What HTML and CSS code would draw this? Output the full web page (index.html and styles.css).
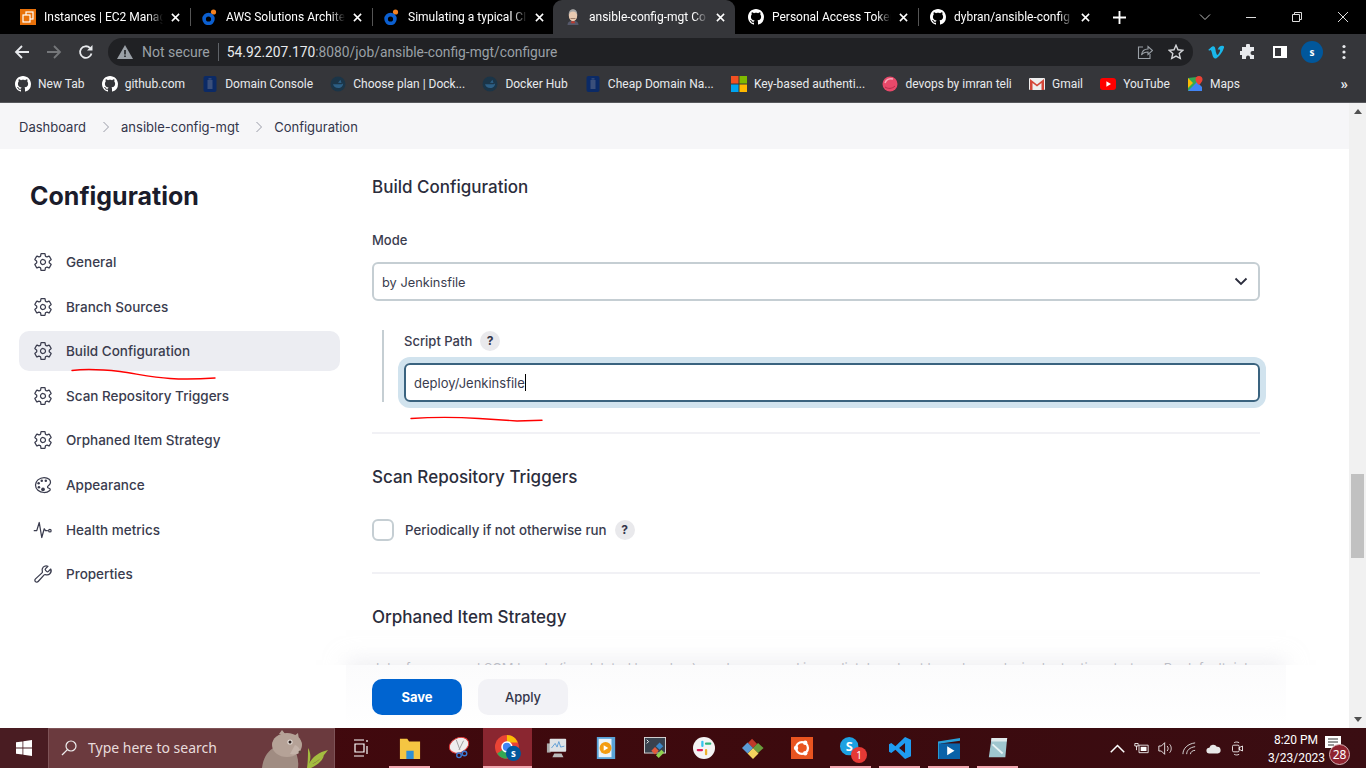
FILE: index.html
```html
<!DOCTYPE html>
<html lang="en">
<head>
  <meta charset="UTF-8" />
  <title>ansible-config-mgt Config [Jenkins]</title>
  <link rel="stylesheet" href="styles.css">
</head>
<body>

  <!-- shared icons -->
  <svg class="defs" aria-hidden="true">
    <symbol id="i-github" viewBox="0 0 16 16">
      <path fill="currentColor" d="M8 0C3.58 0 0 3.58 0 8c0 3.54 2.29 6.53 5.47 7.59.4.07.55-.17.55-.38 0-.19-.01-.82-.01-1.49-2.01.37-2.53-.49-2.69-.94-.09-.23-.48-.94-.82-1.13-.28-.15-.68-.52-.01-.53.63-.01 1.08.58 1.23.82.72 1.21 1.87.87 2.33.66.07-.52.28-.87.51-1.07-1.78-.2-3.64-.89-3.64-3.95 0-.87.31-1.59.82-2.15-.08-.2-.36-1.02.08-2.12 0 0 .67-.21 2.2.82.64-.18 1.32-.27 2-.27s1.36.09 2 .27c1.53-1.04 2.2-.82 2.2-.82.44 1.1.16 1.92.08 2.12.51.56.82 1.27.82 2.15 0 3.07-1.87 3.75-3.65 3.95.29.25.54.73.54 1.48 0 1.07-.01 1.93-.01 2.2 0 .21.15.46.55.38A8.01 8.01 0 0 0 16 8c0-4.42-3.58-8-8-8z"/>
    </symbol>
    <symbol id="i-blue" viewBox="0 0 16 16">
      <circle cx="11.5" cy="3" r="2.6" fill="#f58220"/>
      <circle cx="6.5" cy="10" r="4.4" fill="none" stroke="#0b5fd0" stroke-width="3.6"/>
    </symbol>
    <symbol id="i-close" viewBox="0 0 10 10">
      <path d="M1 1l8 8M9 1l-8 8" fill="none" stroke="currentColor" stroke-width="1.7"/>
    </symbol>
    <symbol id="i-domain" viewBox="0 0 16 16">
      <rect x="1.5" width="13" height="16" rx="2" fill="#0b2a66"/>
      <rect x="5.5" y="4" width="5" height="9" fill="#3a4f7a"/>
      <rect x="6.5" y="2.2" width="3" height="1.4" fill="#3a4f7a"/>
    </symbol>
    <symbol id="i-docker" viewBox="0 0 16 16">
      <circle cx="8" cy="8" r="7.5" fill="#1b3548"/>
      <path d="M3 8.3h8.5c.6 0 1.2-.4 1.6-1 .1 3-2 4.8-4.8 4.8-2.8 0-4.8-1.5-5.3-3.8z" fill="#2d5f85"/>
      <path d="M10.5 3.8l1 3.2-3.5-.3z" fill="#2d5f85"/>
    </symbol>
    <symbol id="i-gear" viewBox="0 0 512 512">
      <path fill="none" stroke="currentColor" stroke-width="32" stroke-linecap="round" stroke-linejoin="round" d="M262.29 192.31a64 64 0 1057.4 57.4 64.13 64.13 0 00-57.4-57.4zM416.39 256a154.34 154.34 0 01-1.53 20.79l45.21 35.46a10.81 10.81 0 012.45 13.75l-42.77 74a10.81 10.81 0 01-13.14 4.59l-44.9-18.08a16.11 16.11 0 00-15.17 1.75A164.48 164.48 0 01325 400.8a15.94 15.94 0 00-8.82 12.14l-6.73 47.89a11.08 11.08 0 01-10.68 9.17h-85.54a11.11 11.11 0 01-10.69-8.87l-6.72-47.82a16.07 16.07 0 00-9-12.22 155.3 155.3 0 01-21.46-12.57 16 16 0 00-15.11-1.71l-44.89 18.07a10.81 10.81 0 01-13.14-4.58l-42.77-74a10.8 10.8 0 012.45-13.75l38.21-30a16.05 16.05 0 006-14.08c-.36-4.17-.58-8.33-.58-12.5s.21-8.27.58-12.35a16 16 0 00-6.07-13.94l-38.19-30A10.81 10.81 0 0149.48 186l42.77-74a10.81 10.81 0 0113.14-4.59l44.9 18.08a16.11 16.11 0 0015.17-1.75A164.48 164.48 0 01187 111.2a15.94 15.94 0 008.82-12.14l6.73-47.89A11.08 11.08 0 01213.23 42h85.54a11.11 11.11 0 0110.69 8.87l6.72 47.82a16.07 16.07 0 009 12.22 155.3 155.3 0 0121.46 12.57 16 16 0 0015.11 1.71l44.89-18.07a10.81 10.81 0 0113.14 4.58l42.77 74a10.8 10.8 0 01-2.45 13.75l-38.21 30a16.05 16.05 0 00-6.07 14.08c.33 4.14.55 8.3.55 12.47z"/>
    </symbol>
  </svg>

  <!-- tab strip -->
  <header class="tabstrip">
    <div class="tab">
      <svg class="fav" viewBox="0 0 16 16"><rect width="16" height="16" fill="#e8710a"/><rect x="6" y="3" width="7" height="7" fill="none" stroke="#fff" stroke-width="1.2"/><rect x="3" y="6" width="7" height="7" fill="#e8710a" stroke="#fff" stroke-width="1.2"/></svg>
      <span class="tab-title">Instances | EC2 Manag</span>
      <svg class="tab-close"><use href="#i-close"/></svg>
    </div>
    <div class="tab">
      <svg class="fav"><use href="#i-blue"/></svg>
      <span class="tab-title">AWS Solutions Archite</span>
      <svg class="tab-close"><use href="#i-close"/></svg>
    </div>
    <div class="tab">
      <svg class="fav"><use href="#i-blue"/></svg>
      <span class="tab-title">Simulating a typical CI</span>
      <svg class="tab-close"><use href="#i-close"/></svg>
    </div>
    <div class="tab tab-active">
      <svg class="fav" viewBox="0 0 16 16"><path d="M2.500 16c0-3 2.500-4.500 5.500-4.500s5.500 1.500 5.500 4.500z" fill="#55586a"/><ellipse cx="8" cy="6.500" rx="4.200" ry="5.800" fill="#e8c9b0"/><path d="M3.800 6C3.400 2 6 .3 8 .3S12.600 2 12.200 6c-1-2.500-2-3.400-4.200-3.400S4.800 3.500 3.800 6z" fill="#a5a5a5"/><path d="M5.500 9.500h5" stroke="#8a6a58" stroke-width=".8"/><path d="M6.500 12.200h3l.5 2h-4z" fill="#c0392b"/></svg>
      <span class="tab-title">ansible-config-mgt Co</span>
      <svg class="tab-close"><use href="#i-close"/></svg>
    </div>
    <div class="tab">
      <svg class="fav fav-white"><use href="#i-github"/></svg>
      <span class="tab-title">Personal Access Token</span>
      <svg class="tab-close"><use href="#i-close"/></svg>
    </div>
    <div class="tab">
      <svg class="fav fav-white"><use href="#i-github"/></svg>
      <span class="tab-title">dybran/ansible-config</span>
      <svg class="tab-close"><use href="#i-close"/></svg>
    </div>
    <svg class="new-tab" viewBox="0 0 14 14"><path d="M7 0v14M0 7h14" stroke="#fff" stroke-width="2"/></svg>
    <div class="win-controls">
      <svg viewBox="0 0 12 12"><path d="M1 3.500l5 5 5-5" fill="none" stroke="#bbb" stroke-width="1"/></svg>
      <svg viewBox="0 0 12 12"><path d="M1 6.500h10" stroke="#ddd" stroke-width="1"/></svg>
      <svg viewBox="0 0 12 12"><path d="M1.500 3.500h7v7h-7zM3.500 3.500v-2h7v7h-2" fill="none" stroke="#ddd" stroke-width="1"/></svg>
      <svg viewBox="0 0 12 12"><path d="M1 1l10 10M11 1L1 11" stroke="#ddd" stroke-width="1"/></svg>
    </div>
  </header>

  <!-- address bar -->
  <div class="toolbar">
    <svg class="nav-icon" viewBox="0 0 16 16"><path d="M15 8H2M8 2L2 8l6 6" fill="none" stroke="#e8eaed" stroke-width="1.800"/></svg>
    <svg class="nav-icon" viewBox="0 0 16 16"><path d="M1 8h13M8 2l6 6-6 6" fill="none" stroke="#75777a" stroke-width="1.800"/></svg>
    <svg class="nav-icon" viewBox="0 0 16 16"><path d="M13.500 9.500A5.800 5.800 0 1 1 12 4" fill="none" stroke="#e8eaed" stroke-width="1.800"/><path d="M14.500 1v5.500H9z" fill="#e8eaed"/></svg>
    <div class="omnibox">
      <svg class="warn" viewBox="0 0 16 14"><path d="M8 0l8 14H0z" fill="#9aa0a6"/><path d="M7.200 5h1.600v4.500H7.200zM7.200 10.500h1.600V12H7.200z" fill="#202124"/></svg>
      <span class="not-secure">Not secure</span>
      <span class="omni-sep"></span>
      <span class="url"><b>54.92.207.170</b>:8080/job/ansible-config-mgt/configure</span>
      <svg class="omni-share" viewBox="0 0 16 16"><path d="M6 3H1.500v11.500h11.500V10" fill="none" stroke="#9aa0a6" stroke-width="1.100"/><path d="M4.500 11c.5-4 3.500-6 6.500-6V2.500L15.500 6.500 11 10.500V8c-2.500 0-5 .8-6.500 3z" fill="none" stroke="#9aa0a6" stroke-width="1.100"/></svg>
      <svg class="omni-star" viewBox="0 0 16 16"><path d="M8 1.300l2 4.500 4.900.5-3.700 3.300 1.100 4.800L8 12.100l-4.300 2.300 1.100-4.800-3.700-3.300 4.900-.5z" fill="none" stroke="#d5d7da" stroke-width="1.400"/></svg>
    </div>
    <div class="ext-icons">
      <svg viewBox="0 0 18 16"><path d="M17.500 3.700c-.1 1.700-1.300 4-3.600 7-2.400 3.100-4.400 4.700-6 4.700-1 0-1.900-1-2.600-2.800L4.300 8.500C3.800 6.700 3.200 5.800 2.600 5.800c-.1 0-.6.300-1.400.9L.4 5.600c.9-.8 1.800-1.600 2.600-2.400C4.200 2.200 5.100 1.600 5.700 1.600c1.400-.1 2.300.8 2.600 2.900.4 2.200.6 3.600.8 4.100.4 1.800.9 2.700 1.400 2.700.4 0 1-.6 1.800-1.800.8-1.200 1.200-2.200 1.300-2.800.1-1-.3-1.500-1.300-1.500-.5 0-.9.100-1.400.3.900-3 2.700-4.500 5.300-4.400 1.900 0 2.800 1.300 2.700 3.600z" fill="#1ab7ea"/></svg>
      <svg viewBox="0 0 16 16"><path d="M6 1.500a2 2 0 0 1 4 0V3h4v4h-1.500a2 2 0 0 0 0 4H14v4h-4v-1.500a2 2 0 0 0-4 0V15H2v-4H.5a2 2 0 0 1 0-4H2V3h4z" fill="#e8eaed"/></svg>
      <svg viewBox="0 0 16 16"><path d="M1 2h14v12H1z" fill="#fff"/><path d="M3 4h6v8H3z" fill="#35363a"/></svg>
      <span class="avatar">s</span>
      <svg viewBox="0 0 16 16"><circle cx="8" cy="2.500" r="1.600" fill="#e8eaed"/><circle cx="8" cy="8" r="1.600" fill="#e8eaed"/><circle cx="8" cy="13.500" r="1.600" fill="#e8eaed"/></svg>
    </div>
  </div>

  <!-- bookmarks -->
  <nav class="bookmarks">
    <a class="bm"><svg class="fav fav-white"><use href="#i-github"/></svg>New Tab</a>
    <a class="bm"><svg class="fav fav-white"><use href="#i-github"/></svg>github.com</a>
    <a class="bm"><svg class="fav"><use href="#i-domain"/></svg>Domain Console</a>
    <a class="bm"><svg class="fav"><use href="#i-docker"/></svg>Choose plan | Dock...</a>
    <a class="bm"><svg class="fav"><use href="#i-docker"/></svg>Docker Hub</a>
    <a class="bm"><svg class="fav"><use href="#i-domain"/></svg>Cheap Domain Na...</a>
    <a class="bm"><svg class="fav" viewBox="0 0 16 16"><rect width="7.500" height="7.500" fill="#f25022"/><rect x="8.500" width="7.500" height="7.500" fill="#7fba00"/><rect y="8.500" width="7.500" height="7.500" fill="#00a4ef"/><rect x="8.500" y="8.500" width="7.500" height="7.500" fill="#ffb900"/></svg>Key-based authenti...</a>
    <a class="bm"><svg class="fav" viewBox="0 0 16 16"><circle cx="8" cy="8" r="7.500" fill="#e8496a"/><path d="M3 7c1-3 4-5 8-4" fill="none" stroke="#f9a8b8" stroke-width="1.500"/><path d="M3 11c3 2 7 2 10-1" fill="none" stroke="#b82c4b" stroke-width="1"/></svg>devops by imran teli</a>
    <a class="bm"><svg class="fav" viewBox="0 0 16 16"><rect y="2" width="16" height="12" rx="1" fill="#eee"/><path d="M1 3v11h2.500V7L8 10.500 12.500 7v7H15V3l-7 5.500z" fill="#d44638"/></svg>Gmail</a>
    <a class="bm"><svg class="fav" viewBox="0 0 16 16"><rect y="2" width="16" height="12" rx="3" fill="#f00"/><path d="M6.400 5.300L11 8l-4.600 2.700z" fill="#fff"/></svg>YouTube</a>
    <a class="bm"><svg class="fav" viewBox="0 0 16 16"><path d="M1 2l9-1v14H1z" fill="#34a853"/><path d="M1 15L10 6l5 5v4z" fill="#4285f4"/><path d="M1 2l5 5-5 5z" fill="#fbbc04"/><path d="M12 0a3.500 3.500 0 0 0-3.500 3.500C8.500 6 12 9 12 9s3.500-3 3.500-5.500A3.500 3.500 0 0 0 12 0z" fill="#ea4335"/></svg>Maps</a>
    <span class="bm-more">»</span>
  </nav>

  <!-- jenkins page -->
  <div class="page">
    <div class="viewport">
      <div class="breadcrumbs">
        <span>Dashboard</span>
        <svg viewBox="0 0 8 12"><path d="M1.500 1l5 5-5 5" fill="none" stroke="#9a9ca8" stroke-width="1"/></svg>
        <span>ansible-config-mgt</span>
        <svg viewBox="0 0 8 12"><path d="M1.500 1l5 5-5 5" fill="none" stroke="#9a9ca8" stroke-width="1"/></svg>
        <span>Configuration</span>
      </div>

      <div class="layout">
        <aside class="sidebar">
          <h1>Configuration</h1>
          <ul class="side-nav">
            <li><svg><use href="#i-gear"/></svg>General</li>
            <li><svg><use href="#i-gear"/></svg>Branch Sources</li>
            <li class="current"><svg><use href="#i-gear"/></svg>Build Configuration</li>
            <li><svg><use href="#i-gear"/></svg>Scan Repository Triggers</li>
            <li><svg><use href="#i-gear"/></svg>Orphaned Item Strategy</li>
            <li>
              <svg viewBox="0 0 512 512"><path fill="none" stroke="currentColor" stroke-width="32" stroke-miterlimit="10" d="M430.110 347.900c-6.600-6.100-16.300-7.600-24.600-9-11.500-1.900-15.900-4-22.600-10-14.300-12.700-14.300-31.100 0-43.800l30.300-26.900c46.400-41 46.400-108.200 0-149.200-34.200-30.100-80.100-45-127.800-45-55.700 0-113.900 20.300-158.800 60.100-83.500 73.800-83.500 194.700 0 268.500 41.500 36.700 97.500 55 152.900 55.400h1.700c55.400 0 110-17.900 148.800-52.400 14.400-12.700 12-36.600.1-47.700z"/><circle cx="144" cy="208" r="32" fill="currentColor"/><circle cx="152" cy="311" r="32" fill="currentColor"/><circle cx="224" cy="144" r="32" fill="currentColor"/><circle cx="256" cy="367" r="48" fill="currentColor"/><circle cx="328" cy="144" r="32" fill="currentColor"/></svg>
              Appearance
            </li>
            <li>
              <svg viewBox="0 0 512 512"><path fill="none" stroke="currentColor" stroke-width="32" stroke-linecap="round" stroke-linejoin="round" d="M32 272h64l64-208 64 384 64-224 32 48h48"/><circle cx="432" cy="272" r="32" fill="none" stroke="currentColor" stroke-width="32"/></svg>
              Health metrics
            </li>
            <li>
              <svg viewBox="0 0 512 512"><path fill="none" stroke="currentColor" stroke-width="32" stroke-linecap="round" stroke-linejoin="round" d="M393.870 190a32.100 32.100 0 01-45.250 0l-26.570-26.570a32.090 32.090 0 010-45.260L382.190 58a1 1 0 00-.3-1.640c-38.820-16.640-89.150-8.160-121.110 23.570-30.580 30.350-32.320 76-21.120 115.840a31.930 31.930 0 01-9.060 32.080L64 380a48.170 48.170 0 1068 68l153.200-167.800a31.930 31.930 0 0131.160-9.130c39.540 10.590 84.540 8.600 114.720-21.190 32.490-32 39.500-88.560 23.750-120.930a1 1 0 00-1.600-.26z"/></svg>
              Properties
            </li>
          </ul>
        </aside>

        <main class="main">
          <div class="content">
            <h2>Build Configuration</h2>
            <label class="field-label" for="mode">Mode</label>
            <div class="select-wrap">
              <select id="mode" class="select"><option>by Jenkinsfile</option></select>
              <svg class="select-arrow" viewBox="0 0 14 9"><path d="M1.500 1.500L7 7l5.500-5.500" fill="none" stroke="#2a2c3c" stroke-width="1.800"/></svg>
            </div>

            <div class="nested">
              <div class="nested-label">Script Path <span class="help">?</span></div>
              <div class="text-field">deploy/Jenkinsfile<span class="caret"></span></div>
            </div>

            <hr class="divider">

            <h2>Scan Repository Triggers</h2>
            <div class="check-row">
              <span class="checkbox"></span>
              <span>Periodically if not otherwise run</span>
              <span class="help">?</span>
            </div>

            <hr class="divider">

            <h2>Orphaned Item Strategy</h2>
            <p class="clipped">Jobs for removed SCM heads (i.e. deleted branches) can be removed immediately or kept based on a desired retention strategy. By default, jobs</p>
          </div>

          <div class="actions">
            <button class="btn btn-save">Save</button>
            <button class="btn btn-apply">Apply</button>
          </div>
        </main>
      </div>
    </div>

    <div class="scrollbar">
      <svg viewBox="0 0 8 5"><path d="M4 0l4 5H0z" fill="#505050"/></svg>
      <div class="thumb"></div>
      <svg class="scroll-down" viewBox="0 0 8 5"><path d="M0 0h8L4 5z" fill="#505050"/></svg>
    </div>

    <!-- pen marks drawn over the screenshot -->
    <svg class="marks" viewBox="0 0 1366 768">
      <path d="M72 370.500c12-1.500 30-1 48 1 20 3 34 6 50 7 16 1 30 .5 45-.5" />
      <path d="M411 418.500c22-1.500 45-1.500 68 0 16 1 30 2 38 2.500 8-.3 16-.5 25-.8" />
    </svg>
  </div>

  <!-- windows taskbar -->
  <footer class="taskbar">
    <div class="start">
      <svg viewBox="0 0 16 16"><path d="M0 2.300l6.500-.9v6.200H0zM7.300 1.300L16 0v7.600H7.300zM0 8.400h6.500v6.200L0 13.700zM7.300 8.400H16V16l-8.700-1.200z" fill="#fff"/></svg>
    </div>
    <div class="search">
      <svg class="search-icon" viewBox="0 0 16 16"><circle cx="10" cy="6" r="5" fill="none" stroke="#eee" stroke-width="1.200"/><path d="M6.400 9.600L1 15" stroke="#eee" stroke-width="1.300"/></svg>
      <span>Type here to search</span>
      <svg class="critter" viewBox="0 0 70 40">
        <path d="M3 40c1-9 5-17 13-21h18c4 6 6 14 5 21z" fill="#a08c82"/>
        <path d="M20 6l3-4 4 5zM35 8l4-3 1 7z" fill="#b5a297"/>
        <ellipse cx="28" cy="17" rx="15" ry="12" fill="#b5a297"/>
        <path d="M36 17c3 1 5 4 6 7-3 2-7 3-11 2z" fill="#c4b3a9"/>
        <circle cx="31" cy="14" r="2.600" fill="#e4dcd6"/>
        <circle cx="31" cy="14" r="1.500" fill="#2a1e1c"/>
        <circle cx="41" cy="24" r="1.500" fill="#5a4038"/>
        <path d="M48 40c1-7 1-13 1-20 3 5 3 10 1 16 3-7 10-12 19-14-4 6-10 11-16 14 4-1 8-5 12-9-1 6-7 10-13 13z" fill="#a4bc40"/>
      </svg>
    </div>

    <div class="task-icon task-view">
      <svg viewBox="0 0 16 18"><path d="M1 1h10M1 17h10M2 5h9v8H2zM14 1v2M14 7v8" fill="none" stroke="#fff" stroke-width="1.200"/></svg>
    </div>
    <div class="task-icon running">
      <svg viewBox="0 0 22 24"><path d="M0 2h8l2 3h12v19H0z" fill="#f5c542"/><path d="M7 24v-9h8v9z" fill="#2f8fd6"/></svg>
    </div>
    <div class="task-icon">
      <svg viewBox="0 0 24 24"><ellipse cx="12" cy="9" rx="11" ry="8" fill="#eee" stroke="#d33" transform="rotate(-25 12 9)"/><path d="M9 3l4 11M17 4l-5 10" stroke="#999" stroke-width="1"/><circle cx="12" cy="20" r="2.500" fill="none" stroke="#3a7bd5" stroke-width="1.500"/><circle cx="18" cy="18" r="2.500" fill="none" stroke="#3a7bd5" stroke-width="1.500"/></svg>
    </div>
    <div class="task-icon running active">
      <svg viewBox="0 0 24 24"><circle cx="11" cy="11" r="11" fill="#ea4335"/><path d="M11 11L2 17a11 11 0 0 0 9 5z" fill="#34a853"/><path d="M11 0a11 11 0 0 1 10 7H11z" fill="#fbbc04"/><circle cx="11" cy="11" r="4.500" fill="#4285f4" stroke="#fff" stroke-width="1.500"/><circle cx="17" cy="17" r="7" fill="#01579b"/><text x="17" y="20" class="chrome-s">s</text></svg>
    </div>
    <div class="task-icon">
      <svg viewBox="0 0 24 24"><path d="M1 7h4v10H1z" fill="#aaa"/><rect x="4" y="2" width="18" height="14" rx="1" fill="#dfe3e6"/><path d="M6 12l4-5 2 4 2-6 2 6 4-1" fill="none" stroke="#5a9bd5" stroke-width="1"/><path d="M9 18h8l2 4H7z" fill="#bbb"/></svg>
    </div>
    <div class="task-icon">
      <svg viewBox="0 0 20 24"><rect width="20" height="24" fill="#5aa3d8"/><rect x="2" y="2" width="14" height="20" fill="#eaf3fa"/><circle cx="9.500" cy="12" r="6.500" fill="#f39c12"/><path d="M7.500 9l5 3-5 3z" fill="#fff"/></svg>
    </div>
    <div class="task-icon">
      <svg viewBox="0 0 24 24"><rect x=".5" y=".5" width="23" height="17" fill="#39424e" stroke="#ddd"/><path d="M3 3l2 2-2 2" fill="none" stroke="#fff"/><path d="M8 15l4-4 4 4-4 4z" fill="#e25a3c"/><path d="M13 10l4-4 4 4-4 4z" fill="#3b87c8"/><path d="M13 20l6-6 3 3-6 6z" fill="#8fd14f"/></svg>
    </div>
    <div class="task-icon">
      <svg viewBox="0 0 24 24"><circle cx="12" cy="12" r="12" fill="#f4f4f4"/><rect x="9" y="4" width="2.500" height="7" rx="1.200" fill="#36c5f0"/><rect x="13" y="6" width="7" height="2.500" rx="1.200" fill="#2eb67d"/><rect x="13" y="13" width="2.500" height="7" rx="1.200" fill="#ecb22e"/><rect x="4" y="13" width="7" height="2.500" rx="1.200" fill="#e01e5a"/></svg>
    </div>
    <div class="task-icon">
      <svg viewBox="0 0 24 24"><path d="M12 12L6.500 6.500 11 2l5.500 5.500z" fill="#c0392b"/><path d="M12 12l5.500-5.500 6 5.500-6 5.500z" fill="#6a9c3c"/><path d="M12 12l6 6-6 6-6-6z" fill="#f4d35e"/><path d="M12 12l-6 6-6-6 6-6z" fill="#5b9bd5"/></svg>
    </div>
    <div class="task-icon">
      <svg viewBox="0 0 24 24"><rect width="24" height="24" fill="#e95420"/><circle cx="12" cy="12" r="6.500" fill="none" stroke="#fff" stroke-width="2.500"/><circle cx="5.500" cy="12" r="2.400" fill="#fff"/><circle cx="15.500" cy="6.200" r="2.400" fill="#fff"/><circle cx="15.500" cy="17.800" r="2.400" fill="#fff"/></svg>
    </div>
    <div class="task-icon running">
      <svg viewBox="0 0 24 24"><circle cx="10" cy="10" r="10" fill="#1da1e2"/><text x="10" y="15" class="skype-s">S</text></svg>
      <span class="task-badge">1</span>
    </div>
    <div class="task-icon running">
      <svg viewBox="0 0 24 24"><path d="M17.500 0L24 3v18l-6.500 3L7 14l-4.500 3.500L0 16V8l2.500-1.500L7 10zM17.500 6.500L11 12l6.500 5.500z" fill="#1f9cf0"/></svg>
    </div>
    <div class="task-icon running">
      <svg viewBox="0 0 24 24"><path d="M0 5l24-4v3L3 7v17H0z" fill="#2aa0d8"/><rect x="1" y="7" width="23" height="17" fill="#0a62a8"/><path d="M10 10l8 5-8 5z" fill="#fff"/></svg>
    </div>
    <div class="task-icon running">
      <svg viewBox="0 0 24 24"><path d="M5 1h17l-2 21H2z" fill="#9fc6cf"/><path d="M5 1h17l-.5 4H4.500z" fill="#dfeaec"/><path d="M6 8l11 10" stroke="#e8f3f5" stroke-width="2"/></svg>
    </div>

    <div class="tray">
      <svg viewBox="0 0 10 6"><path d="M.5 5.500L5 1l4.500 4.500" fill="none" stroke="#fff"/></svg>
      <svg viewBox="0 0 18 14"><path d="M1 1h4v3H1zM3 4v5M6 3h11v9H6z" fill="none" stroke="#fff"/><rect x="8" y="5" width="7" height="5" fill="#fff"/></svg>
      <svg viewBox="0 0 18 16"><path d="M1 5h3l4-4v14l-4-4H1zM11 5c1.500 2 1.500 4 0 6M14 3c2.500 3 2.500 7 0 10" fill="none" stroke="#fff"/></svg>
      <svg viewBox="0 0 16 14"><path d="M1 13C1 7 6 2 14 1M5 13c0-4 3-7 9-8M9 13c0-2 2-4 5-4" fill="none" stroke="#ddd"/></svg>
      <svg viewBox="0 0 18 12"><path d="M4 12a3.500 3.500 0 0 1 0-7 5 5 0 0 1 9-1 4 4 0 0 1 1 8z" fill="#e8e8e8"/></svg>
      <svg viewBox="0 0 14 18"><rect x="1" y="5" width="8" height="8" rx="1.500" fill="none" stroke="#fff"/><path d="M9 8l4-2v6l-4-2zM3 2c2-1 4-1 6 0M3 16c2 1 4 1 6 0" fill="none" stroke="#fff"/></svg>
      <div class="clock">8:20 PM<br>3/23/2023</div>
      <div class="notify">
        <svg viewBox="0 0 16 14"><path d="M0 0h16v12H0z" fill="#fff"/><path d="M3 3h10M3 6h10M3 9h6" stroke="#333"/></svg>
        <span class="notify-count">28</span>
      </div>
    </div>
  </footer>

</body>
</html>
```

FILE: styles.css
```css
* {
  box-sizing: border-box;
}

html,
body {
  margin: 0;
  height: 768px;
  overflow: hidden;
}

body {
  display: flex;
  flex-direction: column;
  font-family: 'Inter', sans-serif;
  color: #2f3142;
  background: #fff;
}

.defs {
  display: none;
}

/* ---- chrome: tabs ---- */
.tabstrip {
  height: 34px;
  flex: none;
  display: flex;
  align-items: center;
  padding-left: 8px;
  background: #000;
  color: #fff;
  font-family: 'Roboto', sans-serif;
  font-size: 12px;
}

.tab {
  width: 182px;
  height: 34px;
  flex: none;
  display: flex;
  align-items: center;
  padding: 0 10px 0 12px;
  position: relative;
}

.tab + .tab::before {
  content: '';
  position: absolute;
  left: 0;
  top: 8px;
  height: 18px;
  width: 1px;
  background: #555;
}

.tab-active {
  margin-left: -1px;
  margin-right: 1px;
  background: #35363a;
  border-radius: 9px 9px 0 0;
}

.tab-active::before,
.tab-active + .tab::before {
  display: none;
}

.fav {
  width: 16px;
  height: 16px;
  flex: none;
}

.fav-white {
  color: #fff;
}

.tab-title {
  flex: 1;
  min-width: 0;
  margin-left: 8px;
  white-space: nowrap;
  -webkit-mask-image: linear-gradient(to right, #000 88%, transparent);
  mask-image: linear-gradient(to right, #000 88%, transparent);
}

.tab-close {
  width: 9px;
  height: 9px;
  flex: none;
  margin-left: 8px;
  color: #fff;
}

.new-tab {
  width: 13px;
  height: 13px;
  margin-left: 13px;
}

.win-controls {
  margin-left: auto;
  display: flex;
  padding-right: 17px;
  gap: 34px;
}

.win-controls svg {
  width: 12px;
  height: 12px;
}

/* ---- chrome: toolbar ---- */
.toolbar {
  height: 34px;
  flex: none;
  display: flex;
  align-items: center;
  padding: 2px 0 0 14px;
  background: #35363a;
}

.nav-icon {
  width: 16px;
  height: 16px;
  flex: none;
  margin-right: 16px;
}

.omnibox {
  width: 1085px;
  height: 28px;
  margin-left: -2px;
  flex: none;
  display: flex;
  align-items: center;
  padding: 0 9px 0 9px;
  background: #202124;
  border-radius: 14px;
  font-family: 'Roboto', sans-serif;
  font-size: 14px;
  color: #9aa0a6;
  white-space: nowrap;
}

.warn {
  width: 16px;
  height: 14px;
  flex: none;
}

.not-secure {
  margin-left: 9px;
}

.omni-sep {
  width: 1px;
  height: 18px;
  margin: 0 8px 0 8px;
  background: #5f6368;
}

.url {
  font-size: 13.8px;
}

.url b {
  font-weight: 400;
  color: #e8eaed;
}

.omni-share {
  width: 16px;
  height: 16px;
  margin-left: auto;
}

.omni-star {
  width: 16px;
  height: 16px;
  margin-left: 15px;
}

.ext-icons {
  display: flex;
  align-items: center;
  margin-left: 15px;
  gap: 16px;
}

.ext-icons svg {
  width: 16px;
  height: 16px;
  flex: none;
}

.avatar {
  width: 22px;
  height: 22px;
  margin: 0 -3px;
  border-radius: 50%;
  background: #01579b;
  color: #fff;
  font: 700 10px/22px 'Noto Sans', sans-serif;
  text-align: center;
}

/* ---- chrome: bookmarks ---- */
.bookmarks {
  height: 35px;
  flex: none;
  display: flex;
  align-items: center;
  padding: 0 0 2px 15px;
  background: #35363a;
  border-bottom: 1px solid #57585c;
  color: #e8eaed;
  font-family: 'Roboto', sans-serif;
  font-size: 12px;
  white-space: nowrap;
}

.bm {
  display: flex;
  align-items: center;
  gap: 7px;
  margin-right: 17.2px;
}

.bm-more {
  margin-left: auto;
  padding-right: 18px;
  font-size: 15px;
  font-weight: 700;
}

/* ---- jenkins page ---- */
.page {
  flex: 1;
  min-height: 0;
  display: flex;
  position: relative;
}

.viewport {
  flex: 1;
  min-width: 0;
  display: flex;
  flex-direction: column;
}

.breadcrumbs {
  height: 46px;
  flex: none;
  display: flex;
  align-items: center;
  padding: 2px 0 0 19px;
  background: #f6f6f8;
  font-size: 13px;
  color: #33354a;
}

.breadcrumbs svg {
  width: 8px;
  height: 12px;
  margin: 0 11px 0 16px;
}

.layout {
  flex: 1;
  min-height: 0;
  display: flex;
}

.sidebar {
  width: 372px;
  flex: none;
  padding: 30px 32px 0 19px;
}

.sidebar h1 {
  margin: 0 0 29px 11px;
  height: 34px;
  font-size: 25px;
  line-height: 34px;
  font-weight: 650;
  color: #1b1c2b;
}

.side-nav {
  margin: 0;
  padding: 0;
  list-style: none;
}

.side-nav li {
  height: 40px;
  margin-bottom: 4.6px;
  display: flex;
  align-items: center;
  gap: 13px;
  padding-left: 14px;
  border-radius: 10px;
  font-size: 13.5px;
  font-weight: 450;
  color: #3a3c4e;
}

.side-nav svg {
  width: 20px;
  height: 20px;
  flex: none;
}

.side-nav .current {
  background: #ecedf2;
}

.main {
  width: 888px;
  flex: none;
  display: flex;
  flex-direction: column;
}

.content {
  flex: 1;
  min-height: 0;
  overflow: hidden;
  margin: 0 -26px;
  padding: 26px 26px 0;
}

h2 {
  margin: 0 0 31px;
  height: 24px;
  font-size: 17px;
  line-height: 24px;
  font-weight: 500;
  color: #2b2d3c;
}

.field-label,
.nested-label {
  display: flex;
  align-items: center;
  gap: 8px;
  height: 20px;
  font-size: 13px;
  font-weight: 500;
  color: #3a3c4e;
}

.field-label {
  margin-bottom: 12px;
}

.select-wrap {
  position: relative;
  height: 39px;
}

.select {
  width: 100%;
  height: 39px;
  padding: 2px 8px 0;
  border: 2px solid #c5ced3;
  border-radius: 6px;
  background: #fff;
  appearance: none;
  -webkit-appearance: none;
  font: 400 12.8px 'Inter', sans-serif;
  color: #3a3c4e;
}

.select-arrow {
  position: absolute;
  right: 12px;
  top: 15px;
  width: 14px;
  height: 9px;
}

.nested {
  margin: 29px 0 30px 10px;
  height: 72px;
  padding: 1px 0 0 20px;
  border-left: 2px solid #c5ced3;
}

.nested-label {
  margin-bottom: 12px;
}

.help {
  width: 20px;
  height: 20px;
  flex: none;
  border-radius: 50%;
  background: #e9e9ec;
  font-size: 12px;
  font-weight: 700;
  line-height: 20px;
  text-align: center;
  color: #33354a;
}

.text-field {
  width: 856px;
  height: 39px;
  display: flex;
  align-items: center;
  padding: 0 8px;
  border: 2px solid #3a637f;
  border-radius: 6px;
  box-shadow: 0 0 0 6px #d1e3ee;
  font-size: 13px;
  color: #3a3c4e;
}

.caret {
  width: 1px;
  height: 17px;
  background: #000;
}

.divider {
  margin: 0 0 31px;
  height: 2px;
  border: 0;
  background: #f1f1f5;
}

.check-row {
  display: flex;
  align-items: center;
  height: 22px;
  margin: -1px 0 31px;
  font-size: 13.3px;
  font-weight: 500;
  color: #3a3c4e;
}

.checkbox {
  width: 22px;
  height: 22px;
  margin-right: 11px;
  border: 2px solid #c5ced3;
  border-radius: 6px;
}

.check-row .help {
  margin-left: 8px;
}

.clipped {
  margin: 0;
  font-size: 13px;
  white-space: nowrap;
  color: #a9abb5;
}

.actions {
  height: 63px;
  flex: none;
  display: flex;
  gap: 16px;
  margin: 0 -26px;
  padding: 14px 0 0 26px;
  background: linear-gradient(#fbfbfc, #fff);
  box-shadow: 0 -5px 20px rgba(226, 226, 232, .55);
  clip-path: polygon(-30px -40px, calc(100% + 30px) -40px, calc(100% + 30px) 0, 100% 0, 100% 100%, 0 100%, 0 0, -30px 0);
  position: relative;
}

.btn {
  width: 90px;
  height: 36px;
  border: 0;
  border-radius: 10px;
  font: 500 13px 'Inter', sans-serif;
  color: #33354a;
}

.btn-save {
  background: #0064d0;
  color: #fff;
  font-weight: 700;
}

.btn-apply {
  background: #f2f2f6;
}

.scrollbar {
  width: 17px;
  flex: none;
  display: flex;
  flex-direction: column;
  align-items: center;
  padding: 6px 0;
  background: #f1f1f1;
}

.scrollbar svg {
  width: 8px;
  height: 5px;
  flex: none;
}

.thumb {
  width: 13px;
  height: 84px;
  margin-top: 360px;
  background: #c1c1c1;
}

.scrollbar .scroll-down {
  margin-top: auto;
}

.marks {
  position: absolute;
  left: 0;
  top: -103px;
  width: 1366px;
  height: 768px;
  pointer-events: none;
}

.marks path {
  fill: none;
  stroke: #f00;
  stroke-width: 1.4;
  stroke-linecap: round;
}

/* ---- windows taskbar ---- */
.taskbar {
  height: 40px;
  flex: none;
  display: flex;
  align-items: center;
  background: linear-gradient(to right, #44080d, #3c0a0e 60%, #3a0d12);
  font-family: 'Noto Sans', sans-serif;
  color: #fff;
}

.start {
  width: 48px;
  height: 40px;
  flex: none;
  display: flex;
  align-items: center;
  justify-content: center;
  background: #491c22;
}

.start svg {
  width: 16px;
  height: 16px;
}

.search {
  width: 287px;
  height: 40px;
  flex: none;
  margin-right: 1px;
  display: flex;
  align-items: center;
  position: relative;
  overflow: hidden;
  padding: 0 0 2px 12px;
  background: #6b3a3e;
  border: 1px solid #7e5357;
  border-bottom: 0;
  font-size: 14px;
  color: #e8dcdc;
}

.search-icon {
  width: 16px;
  height: 16px;
  margin-right: 11px;
}

.critter {
  position: absolute;
  right: 5px;
  bottom: 0;
  width: 70px;
  height: 40px;
}

.task-icon {
  width: 49px;
  height: 40px;
  flex: none;
  display: flex;
  align-items: center;
  justify-content: center;
  position: relative;
}

.task-icon svg {
  width: 22px;
  height: 22px;
}

.task-view svg {
  width: 16px;
  height: 18px;
}

.task-icon.active svg {
  width: 26px;
  height: 26px;
}

.running::after {
  content: '';
  position: absolute;
  left: 4px;
  right: 4px;
  bottom: 0;
  height: 2px;
  background: #f0a6ae;
}

.active {
  background: #8a2630;
}

.active::after {
  left: 0;
  right: 0;
}

.chrome-s {
  fill: #fff;
  font: 700 9px 'Noto Sans', sans-serif;
  text-anchor: middle;
}

.skype-s {
  fill: #fff;
  font: 700 14px 'Noto Sans', sans-serif;
  text-anchor: middle;
}

.task-badge {
  position: absolute;
  right: 8px;
  bottom: 5px;
  width: 16px;
  height: 16px;
  border-radius: 50%;
  background: #e53935;
  font-size: 10px;
  line-height: 16px;
  text-align: center;
}

.tray {
  margin-left: auto;
  display: flex;
  align-items: center;
  gap: 9px;
}

.tray > svg {
  width: 15px;
  height: 15px;
  flex: none;
}

.clock {
  width: 56px;
  margin-left: 14px;
  font-family: 'Roboto', sans-serif;
  font-size: 12px;
  line-height: 18px;
  text-align: center;
  white-space: nowrap;
  padding-top: 1px;
}

.notify {
  width: 51px;
  height: 40px;
  margin-left: -18px;
  position: relative;
}

.notify svg {
  position: absolute;
  left: 10px;
  top: 8px;
  width: 16px;
  height: 14px;
}

.notify-count {
  position: absolute;
  left: 14px;
  bottom: 3px;
  width: 21px;
  height: 21px;
  border-radius: 50%;
  background: #8f2330;
  border: 1px solid #d9b3b7;
  font-size: 12px;
  line-height: 19px;
  text-align: center;
}
```
